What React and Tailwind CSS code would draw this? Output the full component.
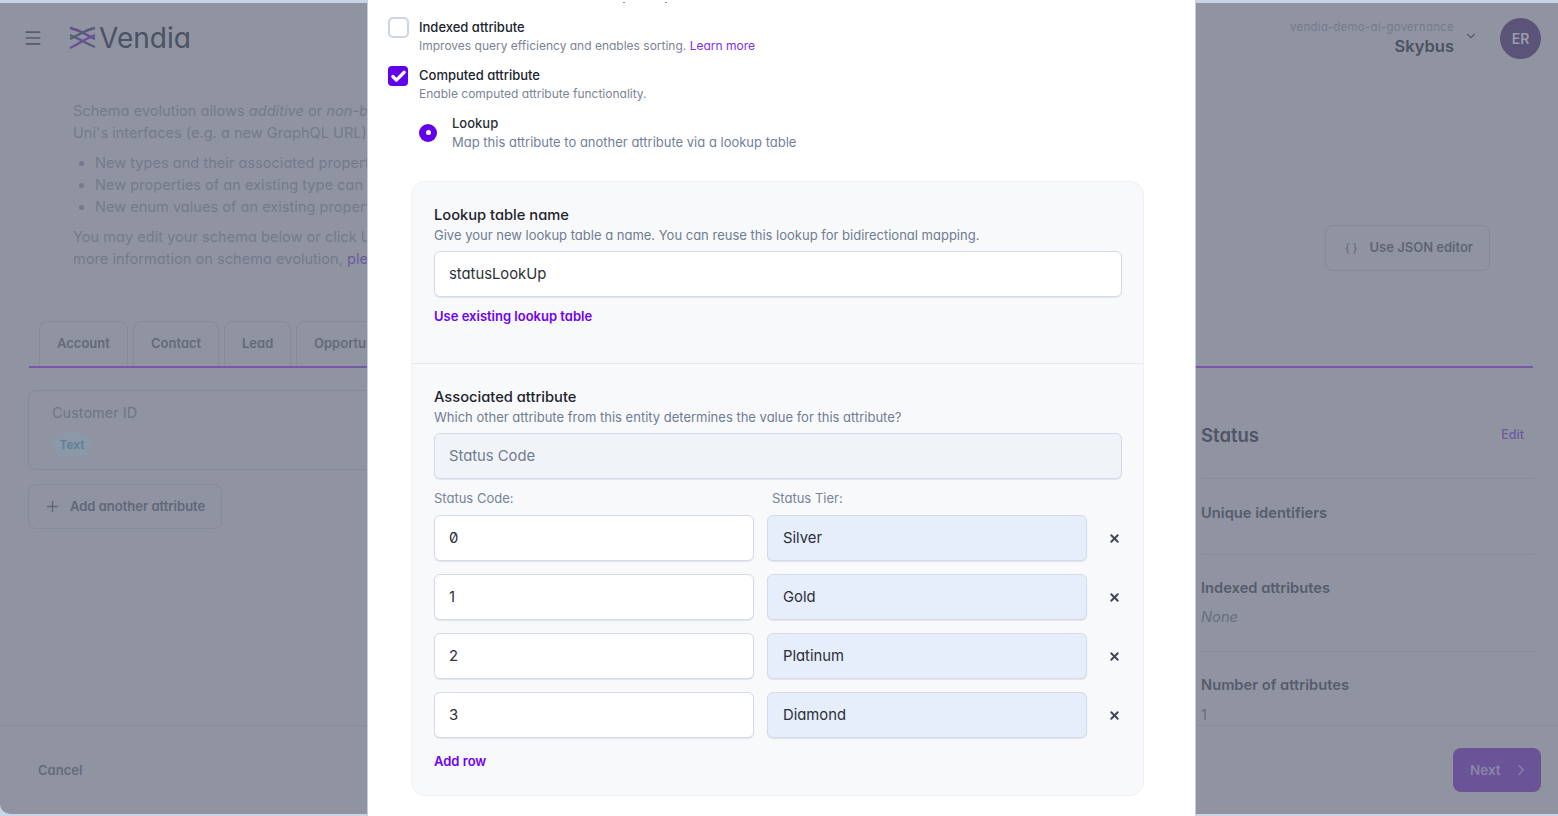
import React from "react";
import { Menu, ChevronDown, Plus, ChevronRight, X, Check } from "lucide-react";

const font = { fontFamily: "Inter, 'Noto Sans', sans-serif" };

function Logo() {
  return (
    <svg width="27" height="24" viewBox="0 0 27 24" fill="none" strokeWidth="2.4">
      <path d="M1 2 C 9 3, 17 9, 26 13" stroke="#5f4f91" />
      <path d="M26 2 C 18 3, 10 9, 1 13" stroke="#565c78" />
      <path d="M1 9 C 9 12, 18 18, 26 21" stroke="#565c78" />
      <path d="M26 9 C 18 12, 9 18, 1 22" stroke="#6a4f9a" />
    </svg>
  );
}

function Background() {
  return (
    <div className="mt-[3px] h-[811px] w-full bg-[#9094a0] rounded-bl-[10px] flex flex-col text-[#6b7183]">
      <header className="h-[70px] flex items-center justify-between pl-[23px] pr-[17px] shrink-0">
        <div className="flex items-center gap-[26px]">
          <Menu size={20} className="text-[#565c6b]" strokeWidth={2} />
          <div className="flex items-center gap-[3px]">
            <Logo />
            <span className="text-[28px] leading-none text-[#4c5263]">Vendia</span>
          </div>
        </div>
        <div className="flex items-center">
          <div className="flex flex-col items-end mr-[10px] mt-[2px]">
            <span className="text-[11.5px] leading-[14px] text-[#757b8d] tracking-[0.25px]">vendia-demo-ai-governance</span>
            <span className="text-[16.5px] leading-[24px] font-semibold text-[#4c5263]">Skybus</span>
          </div>
          <ChevronDown size={14} className="text-[#565c6b] mb-[5px]" />
          <div className="ml-[22px] w-[41px] h-[41px] rounded-full bg-[#5c5378] flex items-center justify-center text-[14px] font-semibold text-[#9a9db0]">ER</div>
        </div>
      </header>

      <div className="flex justify-between pl-[73px] pr-[68px] h-[248px] shrink-0">
        <div className="pt-[27px] text-[14.6px] leading-[22px] text-[#747a8c] w-[294px] whitespace-nowrap">
          <p>Schema evolution allows <em>additive</em> or <em>non-breaking</em></p>
          <p>Uni's interfaces (e.g. a new GraphQL URL)</p>
          <ul className="mt-[8px] pl-[22px] list-disc">
            <li>New types and their associated properties</li>
            <li>New properties of an existing type can</li>
            <li>New enum values of an existing property</li>
          </ul>
          <p className="mt-[8px]">You may edit your schema below or click Use</p>
          <p>more information on schema evolution, <span className="text-[#6a5a9e]">please</span></p>
        </div>
        <div className="pt-[152px]">
          <div className="h-[46px] w-[165px] rounded-[8px] border border-[#868a98] flex items-center pl-[19px] gap-[12px] text-[13px] font-semibold text-[#5f6475]">
            <span className="text-[11px] font-normal">{"{ }"}</span>
            <span>Use JSON editor</span>
          </div>
        </div>
      </div>

      <div className="ml-[29px] mr-[25px] h-[47px] shrink-0 border-b-2 border-[#7558a8] flex gap-[5px] pl-[10px]">
        {[["Account", 89], ["Contact", 86], ["Lead", 67], ["Opportunities", 120]].map(([t, w]) => (
          <div key={t} style={{ width: w }} className="rounded-t-[8px] border border-b-0 border-[#878b99] flex items-center pl-[17px] text-[13px] font-semibold text-[#646a7b]">{t}</div>
        ))}
      </div>

      <div className="flex justify-between pl-[28px] pr-[24px] h-[358px] shrink-0 border-b border-[#888c98]">
        <div className="pt-[22px] w-[340px] shrink-0">
          <div className="h-[80px] w-[400px] rounded-[8px] border border-[#868b9a] pl-[23px] pt-[11px]">
            <div className="text-[14.5px] leading-[22px] text-[#6f7587]">Customer ID</div>
            <div className="mt-[8px] w-[40px] h-[25px] rounded-full bg-[#8b98a8] flex items-center justify-center text-[12px] font-semibold text-[#5f8094]">Text</div>
          </div>
          <div className="mt-[14px] h-[45px] w-[194px] rounded-[8px] border border-[#868b9a] flex items-center pl-[15px] gap-[9px] text-[13px] font-semibold text-[#616779]">
            <Plus size={17} />
            <span>Add another attribute</span>
          </div>
        </div>
        <div className="w-[333px] text-[#565c6d]">
          <div className="h-[111px] border-b border-[#888c98] pt-[55px] flex justify-between items-start pr-[10px]">
            <span className="text-[18.5px] leading-[24px] font-semibold text-[#4f5566]">Status</span>
            <span className="text-[12.5px] leading-[24px] font-medium text-[#6a5a9e]">Edit</span>
          </div>
          <div className="h-[76px] border-b border-[#888c98] pt-[24px] text-[14.7px] leading-[20px] font-semibold">Unique identifiers</div>
          <div className="h-[97px] border-b border-[#888c98] pt-[23px] text-[14.7px] leading-[20px]">
            <div className="font-semibold">Indexed attributes</div>
            <div className="mt-[9px] italic text-[#686e80]">None</div>
          </div>
          <div className="pt-[23px] text-[14.7px] leading-[20px]">
            <div className="font-semibold">Number of attributes</div>
            <div className="mt-[10px] text-[#686e80]">1</div>
          </div>
        </div>
      </div>

      <footer className="flex-1 flex items-center justify-between pl-[38px] pr-[17px]">
        <span className="mt-[2px] text-[13px] font-semibold text-[#646a7b]">Cancel</span>
        <div className="w-[88px] h-[44px] rounded-[8px] bg-[#6b5398] flex items-center pl-[17px] gap-[11px] text-[13.5px] font-semibold text-[#8a85a8]">
          <span>Next</span>
          <ChevronRight size={18} strokeWidth={1.5} />
        </div>
      </footer>
    </div>
  );
}

function Field({ value, className = "" }) {
  return (
    <div className={`h-[46px] rounded-[6px] border border-[#d3dbe8] shadow-[0_1px_1px_rgba(100,116,139,0.15)] flex items-center text-[14.8px] text-[#2b2f38] ${className}`}>
      {value}
    </div>
  );
}

function Row({ a, b, zero }) {
  return (
    <div className="flex items-center">
      <Field value={a} className={`w-[320px] pl-[14px] bg-white ${zero ? "slashed-zero" : ""}`} />
      <Field value={b} className="ml-[13px] w-[320px] pl-[15px] bg-[#e6eefb]" />
      <X size={13} strokeWidth={3.5} className="ml-[21px] mt-[1px] text-[#3f4654]" />
    </div>
  );
}

function Modal() {
  return (
    <div className="absolute left-[367px] top-0 w-[829px] h-[816px] bg-white border-l border-r border-[#c4cfdd] overflow-hidden">
      <span className="absolute left-[255px] top-[2px] w-[2px] h-[1px] bg-[#8a909c]" />
      <span className="absolute left-[297px] top-[2px] w-[2px] h-[1px] bg-[#8a909c]" />
      <div className="pt-[17px] pl-[20px]">
        <div className="flex gap-[10px]">
          <div className="w-[21px] h-[21px] rounded-[5px] border-2 border-[#ccd5e3] bg-white" />
          <div className="mt-[1px]">
            <div className="text-[13px] leading-[18px] font-medium text-[#20242e]">Indexed attribute</div>
            <div className="text-[12px] leading-[19px] text-[#7b8494]">
              Improves query efficiency and enables sorting. <span className="text-[#7c2df0]">Learn more</span>
            </div>
          </div>
        </div>
        <div className="flex gap-[11px] mt-[10px]">
          <div className="w-[20px] h-[20px] mt-[1px] rounded-[4px] bg-[#6200ea] flex items-center justify-center">
            <Check size={17} strokeWidth={4.5} className="text-white" />
          </div>
          <div className="mt-[1px]">
            <div className="text-[13px] leading-[18px] font-medium text-[#20242e]">Computed attribute</div>
            <div className="text-[12px] leading-[19px] text-[#7b8494]">Enable computed attribute functionality.</div>
          </div>
        </div>
        <div className="flex items-center gap-[15px] ml-[31px] mt-[11px]">
          <div className="w-[18px] h-[18px] rounded-full bg-[#6200ea] flex items-center justify-center mt-[-1px]">
            <div className="w-[5px] h-[5px] rounded-full bg-white" />
          </div>
          <div>
            <div className="text-[13px] leading-[19px] font-medium text-[#2b2f38]">Lookup</div>
            <div className="text-[13px] leading-[19px] text-[#71809a]">Map this attribute to another attribute via a lookup table</div>
          </div>
        </div>
      </div>

      <div className="mt-[29px] ml-[43px] w-[733px] h-[615px] rounded-[14px] border border-[#eef1f5] bg-[#f8f9fb]">
        <div className="h-[182px] border-b border-[#e5e8ee] pt-[23px] px-[22px]">
          <div className="text-[14.7px] leading-[20px] font-medium text-[#1e222b]">Lookup table name</div>
          <div className="text-[13px] leading-[20px] text-[#6f7c92]">Give your new lookup table a name. You can reuse this lookup for bidirectional mapping.</div>
          <Field value="statusLookUp" className="mt-[6px] w-[688px] pl-[14px] bg-white" />
          <div className="mt-[9px] text-[13px] leading-[20px] font-semibold text-[#6f00f5]">Use existing lookup table</div>
        </div>
        <div className="pt-[23px] px-[22px]">
          <div className="text-[14.7px] leading-[20px] font-medium text-[#1e222b]">Associated attribute</div>
          <div className="text-[13px] leading-[20px] text-[#6f7c92]">Which other attribute from this entity determines the value for this attribute?</div>
          <Field value="Status Code" className="mt-[6px] w-[688px] pl-[14px] bg-[#f0f3f7] text-[#6f7c92]" />
          <div className="mt-[9px] flex text-[13px] leading-[20px] text-[#76839a]">
            <span className="w-[338px]">Status Code:</span>
            <span>Status Tier:</span>
          </div>
          <div className="mt-[7px] flex flex-col gap-[13px]">
            <Row a="0" b="Silver" zero />
            <Row a="1" b="Gold" />
            <Row a="2" b="Platinum" />
            <Row a="3" b="Diamond" />
          </div>
          <div className="mt-[13px] text-[13px] leading-[20px] font-semibold text-[#6f00f5]">Add row</div>
        </div>
      </div>
    </div>
  );
}

export default function App() {
  return (
    <div style={font} className="relative w-[1558px] h-[816px] overflow-hidden bg-[#c9d5e4] [font-feature-settings:'cv11']">
      <Background />
      <Modal />
    </div>
  );
}
